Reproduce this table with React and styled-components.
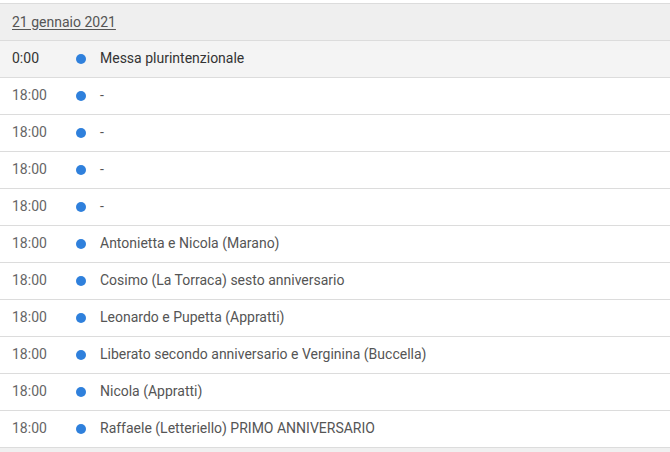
import React from "react";
import styled, { createGlobalStyle } from "styled-components";

const Global = createGlobalStyle`
  html, body { margin: 0; padding: 0; background: #f0f0f0; }
  body { font-family: Roboto, "Noto Sans", Arial, sans-serif; }
`;

const Wrap = styled.div`
  padding-top: 3px;
  background: #fff;
`;

const Table = styled.div`
  border-top: 1px solid #dcdcdc;
  background: #f0f0f0;
`;

const Header = styled.div`
  height: 36px;
  display: flex;
  align-items: center;
  padding-left: 12px;
  padding-bottom: 1px;
  box-sizing: border-box;
  background: #efefef;
  border-bottom: 1px solid #dcdcdc;
  font-size: 14px;
  color: #555;
  text-decoration: underline;
  text-underline-offset: 2px;
  height: 37px;
`;

const Row = styled.div`
  height: 37px;
  box-sizing: border-box;
  padding-bottom: 2px;
  display: flex;
  align-items: center;
  border-bottom: 1px solid #dcdcdc;
  background: ${(p) => (p.$active ? "#f4f4f4" : "#fff")};
  font-size: 14px;
`;

const Time = styled.span`
  width: 76px;
  padding-left: 12px;
  box-sizing: border-box;
  color: ${(p) => (p.$active ? "#333" : "#666")};
`;

const Dot = styled.span`
  width: 10px;
  height: 10px;
  border-radius: 50%;
  background: #2f80dc;
  margin-right: 14px;
  margin-top: 1px;
  flex: none;
`;

const Text = styled.span`
  color: ${(p) => (p.$active ? "#333" : "#555")};
`;

const Footer = styled.div`
  height: 5px;
  background: #f0f0f0;
`;

const rows = [
  ["0:00", "Messa plurintenzionale", true],
  ["18:00", "-"],
  ["18:00", "-"],
  ["18:00", "-"],
  ["18:00", "-"],
  ["18:00", "Antonietta e Nicola (Marano)"],
  ["18:00", "Cosimo (La Torraca) sesto anniversario"],
  ["18:00", "Leonardo e Pupetta (Appratti)"],
  ["18:00", "Liberato secondo anniversario e Verginina (Buccella)"],
  ["18:00", "Nicola (Appratti)"],
  ["18:00", "Raffaele (Letteriello) PRIMO ANNIVERSARIO"],
];

export default function App() {
  return (
    <>
      <Global />
      <Wrap>
        <Table>
          <Header>21 gennaio 2021</Header>
          {rows.map(([t, txt, a], i) => (
            <Row key={i} $active={a}>
              <Time $active={a}>{t}</Time>
              <Dot />
              <Text $active={a}>{txt}</Text>
            </Row>
          ))}
          <Footer />
        </Table>
      </Wrap>
    </>
  );
}
